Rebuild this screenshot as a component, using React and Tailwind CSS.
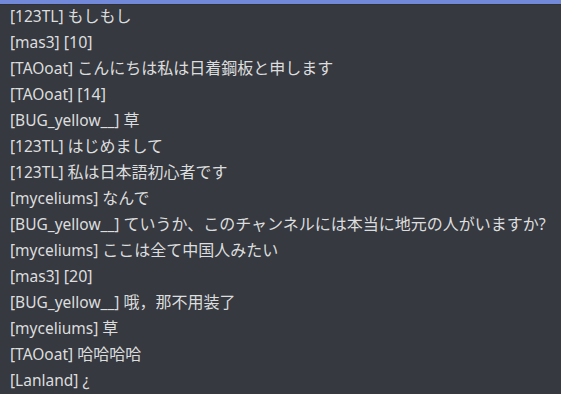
const lines = [
  ['123TL', 'もしもし'],
  ['mas3', '[10]'],
  ['TAOoat', 'こんにちは私は日着鋼板と申します'],
  ['TAOoat', '[14]'],
  ['BUG_yellow__', '草'],
  ['123TL', 'はじめまして'],
  ['123TL', '私は日本語初心者です'],
  ['myceliums', 'なんで'],
  ['BUG_yellow__', 'ていうか、このチャンネルには本当に地元の人がいますか?'],
  ['myceliums', 'ここは全て中国人みたい'],
  ['mas3', '[20]'],
  ['BUG_yellow__', '哦，那不用装了'],
  ['myceliums', '草'],
  ['TAOoat', '哈哈哈哈'],
  ['Lanland', '¿'],
];

export default function App() {
  return (
    <div className="relative w-[561px] h-[394px] overflow-hidden bg-[#36393f] text-[#dcddde] font-['Noto_Sans','Noto_Sans_CJK_JP',sans-serif]">
      {/* top banner strip */}
      <div className="absolute top-0 left-0 right-0 h-[4px] bg-[#7289da] border-b border-[#2f3136] box-content" />
      <div className="pt-[3px] pl-[10px] flex flex-col">
        {lines.map(([name, msg], i) => (
          <div key={i} className="h-[26px] leading-[26px] text-[15.5px] whitespace-nowrap">
            [{name}] <span className="text-[16px]">{msg}</span>
          </div>
        ))}
      </div>
    </div>
  );
}
